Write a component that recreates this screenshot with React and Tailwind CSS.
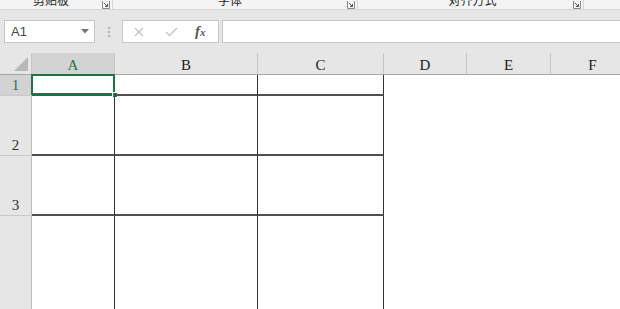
const cjk = { fontFamily: '"Noto Sans CJK SC", "Noto Sans", sans-serif' };
const hdr = { fontFamily: '"Liberation Serif", "DejaVu Serif", serif' };
const ui = { fontFamily: '"Liberation Sans", Arial, sans-serif' };

function Launcher() {
  return (
    <svg width="8" height="8" viewBox="0 0 8 8" className="shrink-0">
      <path d="M0.5 0 V7.5 H7.5 V0" fill="none" stroke="#8a8a8a" strokeWidth="1" />
      <path d="M2 2 L5.5 5.5 M5.5 3 V5.5 H3" fill="none" stroke="#555" strokeWidth="1" />
    </svg>
  );
}

function RibbonGroup({ label, width, labelPad = 0 }) {
  return (
    <div className="flex h-full shrink-0 items-start border-r border-[#d5d5d5]" style={{ width }}>
      <div className="flex flex-1 justify-center" style={{ paddingLeft: labelPad }}>
        <span className="-mt-[7px] text-[12px] leading-[14px] text-[#262626]" style={cjk}>
          {label}
        </span>
      </div>
      <div className="mr-[2px] mt-[1px]">
        <Launcher />
      </div>
    </div>
  );
}

const cols = [
  { name: 'A', w: 83 },
  { name: 'B', w: 143 },
  { name: 'C', w: 126 },
  { name: 'D', w: 83 },
  { name: 'E', w: 84 },
  { name: 'F', w: 84 },
];

const rows = [
  { n: 1, h: 21 },
  { n: 2, h: 60 },
  { n: 3, h: 60 },
  { n: '', h: 94 },
];

export default function App() {
  return (
    <div className="h-[309px] w-[620px] overflow-hidden bg-white">
      {/* ribbon bottom edge */}
      <div className="flex h-[10px] overflow-hidden border-b border-[#d4d4d4] bg-[#f4f4f4]">
        <RibbonGroup label="剪贴板" width={113} />
        <RibbonGroup label="字体" width={245} />
        <RibbonGroup label="对齐方式" width={226} labelPad={14} />
        <div className="flex-1" />
      </div>

      {/* formula bar */}
      <div className="flex h-[43px] items-start bg-[#e6e6e6] pl-[4px] pt-[10px]">
        <div className="flex h-[23px] w-[91px] items-center justify-between border border-[#c6c6c6] bg-white pl-[6px] pr-[5px]">
          <span className="text-[13px] text-[#444]" style={ui}>A1</span>
          <svg width="8" height="5" viewBox="0 0 8 5">
            <path d="M0 0 H8 L4 4.5 Z" fill="#777" />
          </svg>
        </div>
        <div className="flex h-[23px] w-[27px] flex-col items-center justify-center gap-[2px]">
          <span className="h-[2px] w-[2px] bg-[#b0b0b0]" />
          <span className="h-[2px] w-[2px] bg-[#b0b0b0]" />
          <span className="h-[2px] w-[2px] bg-[#b0b0b0]" />
        </div>
        <div className="flex h-[23px] w-[97px] items-center border border-[#c6c6c6] bg-white pl-[11px]">
          <svg width="10" height="10" viewBox="0 0 10 10">
            <path d="M1 1 L9 9 M9 1 L1 9" stroke="#c3c3c3" strokeWidth="1.3" />
          </svg>
          <svg width="13" height="10" viewBox="0 0 13 10" className="ml-[21px]">
            <path d="M1 5 L4.5 8.5 L12 1" fill="none" stroke="#c3c3c3" strokeWidth="1.4" />
          </svg>
          <span className="ml-[17px] text-[15px] font-bold italic leading-none text-[#555]" style={hdr}>
            f<span className="text-[11px]">x</span>
          </span>
        </div>
        <div className="ml-[3px] h-[23px] flex-1 border-y border-l border-[#c6c6c6] bg-white" />
      </div>

      {/* column headers */}
      <div className="flex h-[22px] border-b border-[#a8a8a8] bg-[#e6e6e6]" style={hdr}>
        <div className="flex w-[32px] shrink-0 items-end justify-end border-r border-[#c6c6c6] pb-[3px] pr-[3px]">
          <svg width="14" height="14" viewBox="0 0 14 14">
            <path d="M14 0 V14 H0 Z" fill="#b8b8b8" />
          </svg>
        </div>
        {cols.map((c) => (
          <div
            key={c.name}
            className={`flex shrink-0 items-center justify-center border-r border-[#c6c6c6] pt-[3px] text-[15px] ${
              c.name === 'A' ? 'bg-[#d2d2d2] text-[#217346]' : 'text-[#222]'
            }`}
            style={{ width: c.w }}
          >
            {c.name}
          </div>
        ))}
      </div>

      {/* rows */}
      {rows.map((r, ri) => (
        <div key={ri} className="flex" style={{ height: r.h }}>
          <div
            className={`flex w-[32px] shrink-0 items-end justify-center border-r border-[#bcbcbc] pb-[1px] text-[15px] leading-[18px] ${
              r.n === 1 ? 'bg-[#d2d2d2] text-[#217346]' : 'bg-[#e6e6e6] text-[#333]'
            } ${ri < 3 ? 'border-b border-b-[#c8c8c8]' : ''}`}
            style={hdr}
          >
            {r.n}
          </div>
          {cols.map((c, ci) => {
            const bordered = ci < 3;
            return (
              <div
                key={c.name}
                className={`relative shrink-0 ${
                  bordered ? 'border-r-[1.5px] border-r-[#333]' : ''
                } ${bordered && ri < 3 ? 'border-b-2 border-b-[#505050]' : ''}`}
                style={{ width: c.w }}
              >
                {ri === 0 && ci === 0 && (
                  <>
                    <div className="absolute -left-[1px] -top-[1px] bottom-[-1px] right-[-1px] border-2 border-[#217346]" />
                    <div className="absolute -bottom-[4px] -right-[4px] h-[6px] w-[6px] border border-white bg-[#217346]" />
                  </>
                )}
              </div>
            );
          })}
        </div>
      ))}
    </div>
  );
}
